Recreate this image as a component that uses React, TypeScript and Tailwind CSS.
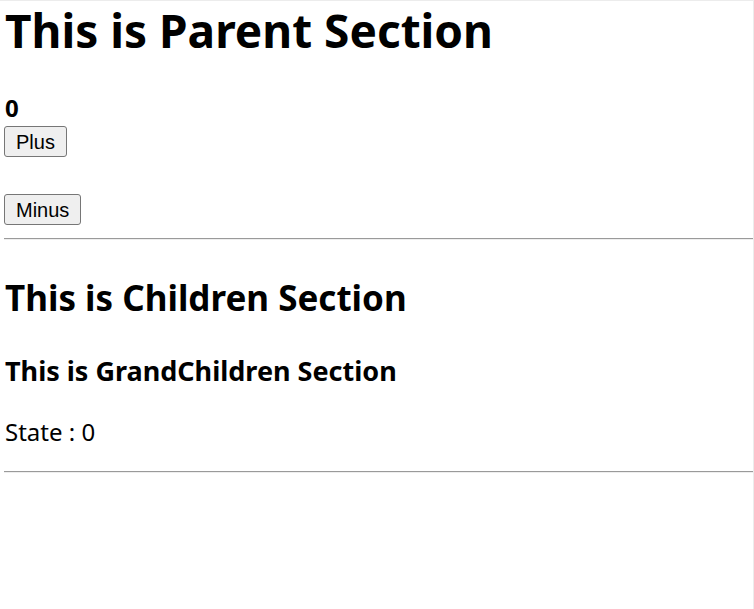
export default function App() {
  const count = 0;
  return (
    <div className="relative h-[609px] w-[754px] overflow-hidden border-t border-r border-[#ececec] bg-white font-['Noto_Sans',sans-serif] text-black">
      <div className="pl-[4px]">
        {/* Parent */}
        <h1 className="pl-px pt-px text-[46px] font-bold leading-[56px]">This is Parent Section</h1>
        <div className="mt-[38px] pl-px text-[24px] font-bold leading-[24px]">{count}</div>
        <button className="mt-[6px] block h-[31px] rounded-[3px] border border-[#767676] bg-[#efefef] px-[11px] font-['Liberation_Sans',sans-serif] text-[20px] leading-[20px]">
          Plus
        </button>
        <button className="mt-[37px] block h-[31px] rounded-[3px] border border-[#767676] bg-[#efefef] px-[11px] font-['Liberation_Sans',sans-serif] text-[20px] leading-[20px]">
          Minus
        </button>
        <hr className="mt-[13px] border-t border-b border-t-[#9a9a9a] border-b-[#eeeeee]" />

        {/* Children */}
        <h2 className="mt-[40px] pl-px text-[35px] font-bold leading-[36px]">This is Children Section</h2>
        <h3 className="mt-[41px] pl-px text-[27px] font-bold leading-[28px]">This is GrandChildren Section</h3>
        <p className="mt-[35px] pl-px text-[24px] leading-[24px]">State : {count}</p>
        <hr className="mt-[27px] border-t border-b border-t-[#9a9a9a] border-b-[#eeeeee]" />
      </div>
    </div>
  );
}
